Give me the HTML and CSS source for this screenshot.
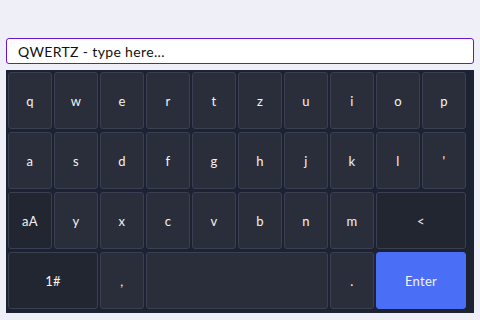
FILE: index.html
```html
<!DOCTYPE html>
<html lang="de">
<head>
    <meta charset="UTF-8">
    <title>Keyboard</title>
    <link rel="stylesheet" href="styles.css">
</head>
<body>
<section class="kb-demo">
    <input class="kb-input" type="text" placeholder="QWERTZ - type here...">
    <div class="kb">
        <button class="key">q</button>
        <button class="key">w</button>
        <button class="key">e</button>
        <button class="key">r</button>
        <button class="key">t</button>
        <button class="key">z</button>
        <button class="key">u</button>
        <button class="key">i</button>
        <button class="key">o</button>
        <button class="key">p</button>

        <button class="key">a</button>
        <button class="key">s</button>
        <button class="key">d</button>
        <button class="key">f</button>
        <button class="key">g</button>
        <button class="key">h</button>
        <button class="key">j</button>
        <button class="key">k</button>
        <button class="key">l</button>
        <button class="key">'</button>

        <button class="key key-fn">aA</button>
        <button class="key">y</button>
        <button class="key">x</button>
        <button class="key">c</button>
        <button class="key">v</button>
        <button class="key">b</button>
        <button class="key">n</button>
        <button class="key">m</button>
        <button class="key key-fn wide">&lt;</button>

        <button class="key key-fn wide">1#</button>
        <button class="key">,</button>
        <button class="key space"></button>
        <button class="key">.</button>
        <button class="key key-enter wide">Enter</button>
    </div>
</section>
</body>
</html>
```

FILE: styles.css
```css
body{ margin: 0; background: #efeff8; font-family: "Lato", "DejaVu Sans", sans-serif;}
.kb-demo{ padding: 38px 6px 0 6px;}
.kb-input{ display: block; box-sizing: border-box; width: 100%; height: 26px; margin: 0 0 6px 0; padding: 0 11px; border: 1px solid #6a14d2; border-radius: 3px; background: #fff; font-family: inherit; font-size: 14px; letter-spacing: 0.35px; color: #111;}
.kb-input::placeholder{ color: #111; opacity: 1;}
.kb{ display: grid; grid-template-columns: repeat(10, 44px); grid-auto-rows: 57px; column-gap: 2px; row-gap: 3px; padding: 2px 8px 4px 2px; background: #1d2233;}
.key{ margin: 0; padding: 0; border: 1px solid #3a4052; border-radius: 3px; background: #2a2e3b; color: #f2f3f6; font-family: inherit; font-size: 13px; letter-spacing: 0.3px;}
.key-fn{ background: #222630;}
.wide{ grid-column: span 2;}
.space{ grid-column: span 4;}
.key-enter{ background: #4a6ef5; border-color: #4a6ef5;}
```
